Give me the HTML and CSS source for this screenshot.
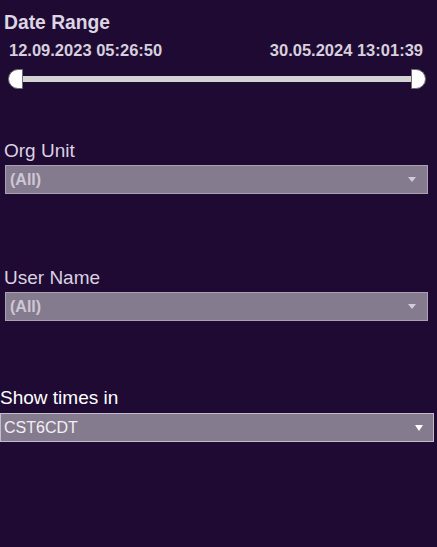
FILE: index.html
```html
<!DOCTYPE html>
<html>
<head>
<meta charset="utf-8">
<link rel="stylesheet" href="styles.css">
</head>
<body>
<div class="panel">
  <section class="date-range">
    <div class="title">Date Range</div>
    <div class="dates">
      <span>12.09.2023 05:26:50</span>
      <span>30.05.2024 13:01:39</span>
    </div>
    <div class="slider">
      <div class="thumb thumb-left"></div>
      <div class="track"></div>
      <div class="thumb thumb-right"></div>
    </div>
  </section>

  <section class="filter filter-org">
    <div class="label">Org Unit</div>
    <div class="select">
      <span class="value">(All)</span>
      <span class="arrow"></span>
    </div>
  </section>

  <section class="filter filter-user">
    <div class="label">User Name</div>
    <div class="select">
      <span class="value">(All)</span>
      <span class="arrow"></span>
    </div>
  </section>

  <section class="filter filter-tz">
    <div class="label">Show times in</div>
    <div class="select">
      <span class="value">CST6CDT</span>
      <span class="arrow"></span>
    </div>
  </section>
</div>
</body>
</html>
```

FILE: styles.css
```css
html, body {
  margin: 0;
  padding: 0;
  background: #1f0a34;
  height: 100%;
}

.panel {
  display: flex;
  flex-direction: column;
  font-family: "Liberation Sans", Arial, sans-serif;
  width: 437px;
}

.date-range {
  padding: 12px 0 0 4px;
  display: flex;
  flex-direction: column;
}

.title {
  font-size: 19.3px;
  font-weight: bold;
  line-height: 22px;
  color: #ddd5e3;
}

.dates {
  display: flex;
  justify-content: space-between;
  margin-top: 6px;
  padding: 0 14px 0 5px;
  font-size: 16.5px;
  font-weight: bold;
  line-height: 20px;
  color: #d6cfdc;
}

.slider {
  display: flex;
  align-items: center;
  margin-top: 9px;
  margin-left: 4px;
  width: 418px;
  height: 20px;
}

.thumb {
  width: 13px;
  height: 18px;
  background: #ffffff;
  border: 1px solid #6d6d72;
}

.thumb-left {
  border-radius: 10px 0 0 10px;
}

.thumb-right {
  border-radius: 0 10px 10px 0;
}

.track {
  flex: 1;
  height: 6px;
  background: #d3d3d3;
}

.filter {
  display: flex;
  flex-direction: column;
}

.filter-org {
  margin-top: 51px;
  padding-left: 4px;
}

.filter-user {
  margin-top: 73px;
  padding-left: 4px;
}

.filter-tz {
  margin-top: 66px;
}

.label {
  font-size: 19px;
  line-height: 22px;
  color: #dad2e0;
}

.filter-tz .label {
  color: #ffffff;
}

.select {
  display: flex;
  align-items: center;
  justify-content: space-between;
  height: 27px;
  margin-top: 3px;
  margin-left: 1px;
  width: 421px;
  background: #857b8f;
  border: 1px solid #aba1b3;
}

.filter-tz .select {
  margin-top: 4px;
  margin-left: 0;
  width: 432px;
  border-color: #c4bcc9;
}

.value {
  padding-left: 4px;
  font-size: 16px;
  font-weight: bold;
  color: #cfc7d5;
}

.filter-tz .value {
  padding-left: 3px;
  font-weight: normal;
  color: #f2eff4;
}

.arrow {
  width: 0;
  height: 0;
  margin-right: 11px;
  border-left: 4.5px solid transparent;
  border-right: 4.5px solid transparent;
  border-top: 5px solid #d3ccd8;
}

.filter-tz .arrow {
  margin-right: 10px;
  border-top-color: #ffffff;
  border-top-width: 6px;
}
```
